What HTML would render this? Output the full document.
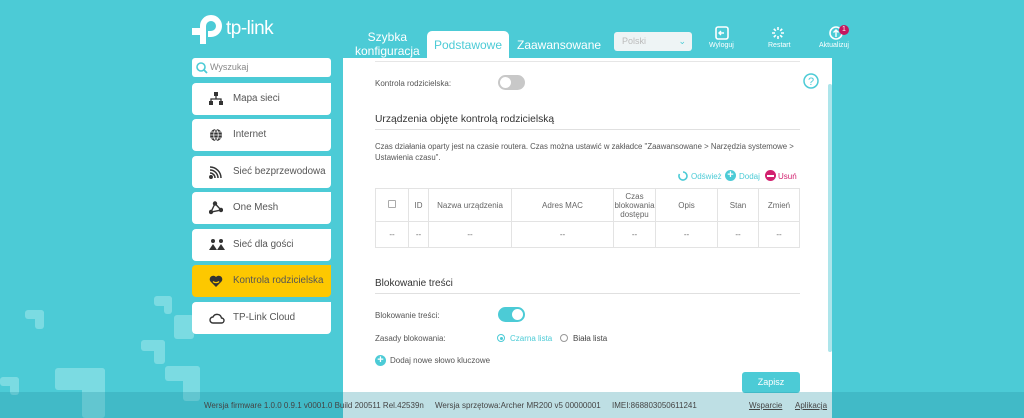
<!DOCTYPE html>
<html><head><meta charset="utf-8"><style>
*{margin:0;padding:0;box-sizing:border-box}
body{width:1024px;height:418px;overflow:hidden;background:#4ccbd6;font-family:"Liberation Sans",sans-serif;position:relative;color:#333}
.a{position:absolute}
.sq{position:absolute;background:#7bdbe2;border-radius:3px}
.nav{position:absolute;left:192px;width:139px;height:32px;background:#fff;border-radius:4px 0 4px 4px;font-size:9.8px;color:#555;line-height:32px;padding-left:41px;white-space:nowrap}
.nav svg{position:absolute;left:17px;top:9px}
.t{position:absolute;font-size:8px;color:#555;white-space:nowrap}
table{border-collapse:collapse;font-size:8px;color:#666;text-align:center}
td{border:1px solid #e3e3e3;padding:0}
.tgl{position:absolute;width:27px;height:15px;border-radius:8px}
.tgl i{position:absolute;top:2px;width:11px;height:11px;border-radius:50%;background:#fff}
</style></head><body>
<div class="sq" style="left:25px;top:310px;width:19px;height:9px"></div>
<div class="sq" style="left:35px;top:310px;width:9px;height:19px"></div>
<div class="sq" style="left:0;top:377px;width:19px;height:9px"></div>
<div class="sq" style="left:10px;top:377px;width:9px;height:18px"></div>
<div class="sq" style="left:55px;top:368px;width:50px;height:22px"></div>
<div class="sq" style="left:82px;top:368px;width:23px;height:50px"></div>
<div class="sq" style="left:141px;top:340px;width:24px;height:11px"></div>
<div class="sq" style="left:154px;top:340px;width:11px;height:24px"></div>
<div class="sq" style="left:165px;top:366px;width:35px;height:15px"></div>
<div class="sq" style="left:183px;top:366px;width:17px;height:35px"></div>
<div class="sq" style="left:154px;top:296px;width:18px;height:10px"></div>
<div class="sq" style="left:164px;top:296px;width:8px;height:18px"></div>
<div class="sq" style="left:174px;top:315px;width:20px;height:24px"></div>
<svg class="a" style="left:192px;top:14px" width="32" height="32" viewBox="0 0 32 32"><path d="M11 30V12a8 8 0 1 1 8 8h-3" fill="none" stroke="#fff" stroke-width="6"/><rect x="0" y="14" width="8" height="7" fill="#fff"/></svg>
<div class="a" style="left:226px;top:18px;color:#fff;font-size:19px;letter-spacing:-0.5px">tp-link</div>
<div class="a" style="left:355px;top:30px;color:#fff;font-size:12px;line-height:14px;text-align:center">Szybka<br>konfiguracja</div>
<div class="a" style="left:427px;top:31px;width:82px;height:28px;background:#fff;border-radius:5px 5px 0 0;color:#4ccbd6;font-size:12px;text-align:center;line-height:28px">Podstawowe</div>
<div class="a" style="left:517px;top:38px;color:#fff;font-size:12px">Zaawansowane</div>
<div class="a" style="left:614px;top:32px;width:78px;height:19px;background:#eef4f5;border-radius:3px;color:#bbb;font-size:9px;line-height:19px;padding-left:8px">Polski<span style="position:absolute;right:6px;color:#4ccbd6;font-size:9px">⌄</span></div>
<svg class="a" style="left:715px;top:26px" width="14" height="14" viewBox="0 0 14 14"><rect x="1" y="1" width="12" height="12" rx="2" fill="none" stroke="#fff" stroke-width="1.6"/><path d="M9 7H4M6 5L4 7l2 2" fill="none" stroke="#fff" stroke-width="1.4"/></svg>
<div class="a" style="left:709px;top:42px;color:#fff;font-size:7px">Wyloguj</div>
<svg class="a" style="left:771px;top:26px" width="14" height="14" viewBox="0 0 14 14" stroke="#fff" stroke-width="1.6"><path d="M7 1v3M7 10v3M1 7h3M10 7h3M2.8 2.8l2 2M9.2 9.2l2 2M11.2 2.8l-2 2M4.8 9.2l-2 2"/></svg>
<div class="a" style="left:768px;top:42px;color:#fff;font-size:7px">Restart</div>
<svg class="a" style="left:829px;top:26px" width="14" height="14" viewBox="0 0 14 14"><circle cx="7" cy="7" r="6" fill="none" stroke="#fff" stroke-width="1.6"/><path d="M7 11V4M4.5 6.5L7 4l2.5 2.5" fill="none" stroke="#fff" stroke-width="1.4"/></svg>
<div class="a" style="left:839px;top:25px;width:10px;height:10px;border-radius:50%;background:#c5175f;color:#fff;font-size:7px;text-align:center;line-height:10px">1</div>
<div class="a" style="left:819px;top:42px;color:#fff;font-size:7px">Aktualizuj</div>
<div class="a" style="left:192px;top:58px;width:139px;height:19px;background:#fff;border-radius:3px;font-size:9px;color:#888;line-height:19px;padding-left:18px">Wyszukaj
<svg style="position:absolute;left:4px;top:4px" width="12" height="12" viewBox="0 0 12 12"><circle cx="5" cy="5" r="4" fill="none" stroke="#4ccbd6" stroke-width="1.6"/><path d="M8 8l3 3" stroke="#4ccbd6" stroke-width="1.8"/></svg></div>
<div class="nav" style="top:83px"><svg width="14" height="14" viewBox="0 0 14 14" fill="#333"><rect x="5" y="0" width="4" height="4"/><rect x="0" y="9" width="4" height="4"/><rect x="10" y="9" width="4" height="4"/><path d="M7 4v3M2 9V7h10v2" stroke="#333" fill="none" stroke-width="1.3"/></svg>Mapa sieci</div>
<div class="nav" style="top:119px"><svg width="14" height="14" viewBox="0 0 14 14"><circle cx="7" cy="7" r="6" fill="#333"/><path d="M1 7h12M7 1c-3 3-3 9 0 12M7 1c3 3 3 9 0 12M2 4h10M2 10h10" stroke="#fff" fill="none" stroke-width=".8"/></svg>Internet</div>
<div class="nav" style="top:156px"><svg width="14" height="14" viewBox="0 0 14 14" fill="none" stroke="#333" stroke-width="1.5"><circle cx="2" cy="12" r="1.2" fill="#333"/><path d="M1 8a5 5 0 0 1 5 5M1 5a8 8 0 0 1 8 8M1 2a11 11 0 0 1 11 11"/></svg>Sieć bezprzewodowa</div>
<div class="nav" style="top:192px"><svg width="14" height="14" viewBox="0 0 14 14" fill="#333"><circle cx="6" cy="2.5" r="2.2"/><circle cx="2" cy="11" r="2.2"/><circle cx="12" cy="9" r="2.2"/><path d="M6 2.5L2 11l10-2z" stroke="#333" fill="none" stroke-width="1.4"/></svg>One Mesh</div>
<div class="nav" style="top:229px"><svg width="16" height="14" viewBox="0 0 16 14" fill="#333"><circle cx="4" cy="3" r="2"/><circle cx="12" cy="3" r="2"/><path d="M0 12l4-6 4 6zM8 12l4-6 4 6z"/></svg>Sieć dla gości</div>
<div class="nav" style="top:265px;background:#fdc800"><svg width="14" height="14" viewBox="0 0 14 14"><path d="M7 13L1.5 7.5A3.3 3.3 0 0 1 7 3a3.3 3.3 0 0 1 5.5 4.5z" fill="#333"/><path d="M4 7.5c1.5 1.5 4.5 1.5 6 0" stroke="#fdc800" fill="none" stroke-width="1.3"/></svg>Kontrola rodzicielska</div>
<div class="nav" style="top:302px"><svg width="16" height="14" viewBox="0 0 16 14"><path d="M4 12a3 3 0 0 1 0-6 4.5 4.5 0 0 1 8.5 1A2.5 2.5 0 0 1 12.5 12z" fill="none" stroke="#333" stroke-width="1.4"/></svg>TP-Link Cloud</div>
<div class="a" style="left:343px;top:58px;width:489px;height:360px;background:#fff"></div>
<div class="a" style="left:828px;top:84px;width:4px;height:268px;background:#ade5eb;border-radius:2px"></div>
<div class="a" style="left:375px;top:61px;width:425px;height:1px;background:#e6e6e6"></div>
<div class="t" style="left:375px;top:79px">Kontrola rodzicielska:</div>
<div class="tgl" style="left:498px;top:75px;background:#c8c8c8"><i style="left:2px"></i></div>
<svg class="a" style="left:803px;top:73px" width="16" height="16" viewBox="0 0 16 16"><circle cx="8" cy="8" r="7" fill="none" stroke="#4ccbd6" stroke-width="1.5"/><text x="8" y="12" font-size="11" text-anchor="middle" fill="#4ccbd6" font-family="Liberation Sans">?</text></svg>
<div class="a" style="left:375px;top:114px;font-size:10.3px;color:#333">Urządzenia objęte kontrolą rodzicielską</div>
<div class="a" style="left:375px;top:129px;width:425px;height:1px;background:#e0e0e0"></div>
<div class="t" style="left:375px;top:141px;line-height:11px;font-size:7.8px">Czas działania oparty jest na czasie routera. Czas można ustawić w zakładce "Zaawansowane &gt; Narzędzia systemowe &gt;<br>Ustawienia czasu".</div>
<svg class="a" style="left:678px;top:171px" width="10" height="10" viewBox="0 0 10 10"><path d="M5 1a4 4 0 1 1-3.5 2" fill="none" stroke="#4ccbd6" stroke-width="1.6"/></svg>
<div class="t" style="left:691px;top:172px;color:#4ccbd6">Odśwież</div>
<div class="a" style="left:725px;top:170px;width:11px;height:11px;border-radius:50%;background:#4ccbd6;color:#fff;font-size:11px;line-height:10px;text-align:center;font-weight:bold">+</div>
<div class="t" style="left:739px;top:172px;color:#4ccbd6">Dodaj</div>
<div class="a" style="left:765px;top:170px;width:11px;height:11px;border-radius:50%;background:#d2206f"><i style="position:absolute;left:2px;top:5px;width:7px;height:1.6px;background:#fff"></i></div>
<div class="t" style="left:778px;top:172px;color:#d2206f">Usuń</div>
<table class="a" style="left:375px;top:188px;width:425px">
<tr style="height:33px"><td style="width:33px"><span style="display:inline-block;width:8px;height:8px;border:1px solid #aaa;border-radius:1px"></span></td><td style="width:20px">ID</td><td style="width:83px">Nazwa urządzenia</td><td style="width:102px">Adres MAC</td><td style="width:42px;line-height:9px">Czas<br>blokowania<br>dostępu</td><td style="width:62px">Opis</td><td style="width:41px">Stan</td><td>Zmień</td></tr>
<tr style="height:26px"><td>--</td><td>--</td><td>--</td><td>--</td><td>--</td><td>--</td><td>--</td><td>--</td></tr></table>
<div class="a" style="left:375px;top:278px;font-size:10px;color:#333">Blokowanie treści</div>
<div class="a" style="left:375px;top:293px;width:425px;height:1px;background:#e0e0e0"></div>
<div class="t" style="left:375px;top:311px">Blokowanie treści:</div>
<div class="tgl" style="left:498px;top:307px;background:#4ccbd6"><i style="left:14px"></i></div>
<div class="t" style="left:375px;top:334px">Zasady blokowania:</div>
<div class="a" style="left:497px;top:334px;width:8px;height:8px;border-radius:50%;border:1px solid #4ccbd6"><i style="position:absolute;left:1.5px;top:1.5px;width:3px;height:3px;border-radius:50%;background:#4ccbd6"></i></div>
<div class="t" style="left:510px;top:334px;color:#4ccbd6">Czarna lista</div>
<div class="a" style="left:560px;top:334px;width:8px;height:8px;border-radius:50%;border:1px solid #999"></div>
<div class="t" style="left:573px;top:334px;color:#444">Biała lista</div>
<div class="a" style="left:375px;top:355px;width:11px;height:11px;border-radius:50%;background:#4ccbd6;color:#fff;font-size:11px;line-height:10px;text-align:center;font-weight:bold">+</div>
<div class="t" style="left:390px;top:356px">Dodaj nowe słowo kluczowe</div>
<div class="a" style="left:742px;top:372px;width:58px;height:21px;background:#4ccbd6;border-radius:3px;color:#fff;font-size:9px;text-align:center;line-height:21px">Zapisz</div>
<div class="a" style="left:0;top:392px;width:1024px;height:26px;background:rgba(40,150,165,.3)"></div>
<div class="t" style="left:204px;top:401px;color:#444">Wersja firmware 1.0.0 0.9.1 v0001.0 Build 200511 Rel.42539n</div>
<div class="t" style="left:435px;top:401px;color:#444">Wersja sprzętowa:Archer MR200 v5 00000001</div>
<div class="t" style="left:612px;top:401px;color:#444">IMEI:868803050611241</div>
<div class="t" style="left:749px;top:401px;color:#444;text-decoration:underline">Wsparcie</div>
<div class="t" style="left:795px;top:401px;color:#444;text-decoration:underline">Aplikacja</div>
</body></html>
